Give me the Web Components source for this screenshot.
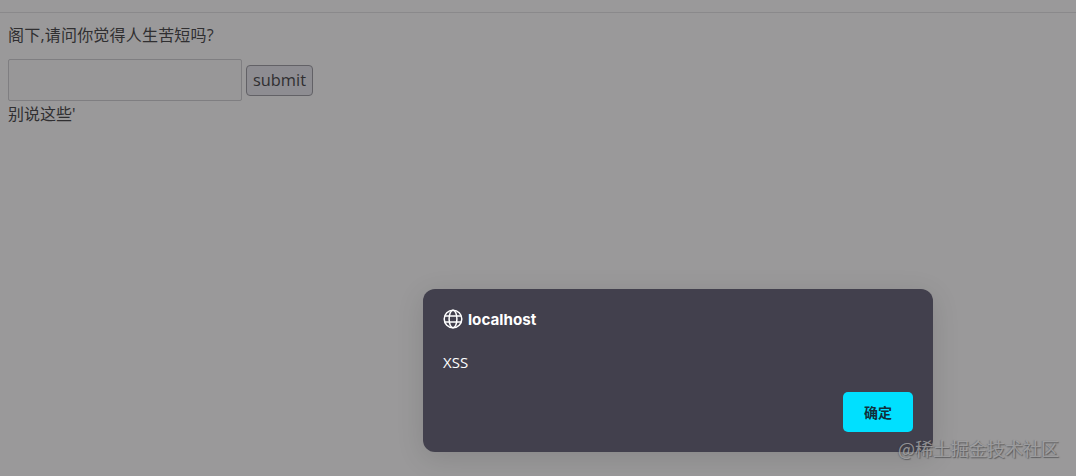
<!DOCTYPE html>
<html lang="zh">
<head>
<meta charset="utf-8">
<title>XSS</title>
<style>
	html, body { margin: 0; height: 100%; background: #9a999a; overflow: hidden; }
</style>
</head>
<body>
<xss-page>
	<span slot="question">阁下,请问你觉得人生苦短吗?</span>
	<span slot="answer">别说这些'</span>
</xss-page>
<alert-dialog host-name="localhost" confirm="确定">XSS</alert-dialog>
<water-mark>@稀土掘金技术社区</water-mark>

<script>
(function() {
	const cjk = '"Open Sans", "Noto Sans CJK SC", sans-serif';

	class xssPage extends HTMLElement {
		constructor() {
			super();
			this.attachShadow({mode: "open"}).innerHTML = `
				<style>
				:host {
					display: block;
					font: 16px/24px ${cjk};
					color: #302f31;
				}
				.top { height: 12px; border-bottom: 1px solid #8a898b; }
				main { padding: 10px 8px 0; }
				p { margin: 0 0 12px; height: 24px; letter-spacing: .2px; }
				form { display: flex; align-items: center; gap: 4px; }
				input {
					box-sizing: border-box;
					width: 234px;
					height: 42px;
					padding: 0;
					background: #989798;
					border: 1px solid #7f7e81;
					border-radius: 2px;
				}
				button {
					box-sizing: border-box;
					width: 67px;
					height: 31px;
					padding: 0;
					font: inherit;
					font-size: 16.4px;
					color: inherit;
					background: #8e8d92;
					border: 1px solid #626166;
					border-radius: 4px;
				}
				.answer { height: 26px; line-height: 26px; }
				</style>
				<div class="top"></div>
				<main>
					<p><slot name="question"></slot></p>
					<form>
						<input type="text">
						<button type="button">submit</button>
					</form>
					<div class="answer"><slot name="answer"></slot></div>
				</main>
			`;
		}
	}

	class alertDialog extends HTMLElement {
		constructor() {
			super();
			this.attachShadow({mode: "open"}).innerHTML = `
				<style>
				:host {
					position: absolute;
					left: 423px;
					top: 289px;
					box-sizing: border-box;
					width: 510px;
					height: 163px;
					padding: 20px;
					display: flex;
					flex-direction: column;
					background: #42404d;
					border-radius: 12px;
					box-shadow: 0 6px 28px rgba(0, 0, 0, .12);
					color: #fff;
					font: 15px/20px Inter, "Noto Sans CJK SC", sans-serif;
				}
				header { display: flex; align-items: center; gap: 5px; height: 20px; font-weight: 700; }
				header span { position: relative; top: 1px; font-size: 15.2px; }
				svg { display: block; }
				.msg { margin-top: 23px; font-size: 15px; font-family: "Open Sans", sans-serif; }
				footer { margin-top: auto; display: flex; justify-content: flex-end; }
				button {
					width: 70px;
					height: 40px;
					padding: 0;
					border: 0;
					border-radius: 5px;
					background: #00e0ff;
					color: #10303c;
					font: 700 14px/20px "Noto Sans CJK SC", sans-serif;
				}
				</style>
				<header>
					<svg width="20" height="20" viewBox="0 0 20 20" fill="none" stroke="#fff" stroke-width="1.5">
						<circle cx="10" cy="10" r="8.8"/>
						<ellipse cx="10" cy="10" rx="3.9" ry="8.8"/>
						<path d="M1.8 7h16.4M1.8 13h16.4"/>
					</svg>
					<span id="host"></span>
				</header>
				<div class="msg"><slot></slot></div>
				<footer><button type="button" id="ok"></button></footer>
			`;
		}

		connectedCallback() {
			this.shadowRoot.getElementById("host").textContent = this.getAttribute("host-name");
			this.shadowRoot.getElementById("ok").textContent = this.getAttribute("confirm");
		}
	}

	class waterMark extends HTMLElement {
		constructor() {
			super();
			this.attachShadow({mode: "open"}).innerHTML = `
				<style>
				:host {
					position: absolute;
					right: 17px;
					top: 435px;
					font: 18px/26px "Noto Sans CJK SC", sans-serif;
					color: rgba(168, 168, 170, .8);
					text-shadow: 1px 1px 1px rgba(60, 60, 62, .6), -1px 0 1px rgba(60, 60, 62, .3);
					white-space: nowrap;
				}
				</style>
				<slot></slot>
			`;
		}
	}

	customElements.define("xss-page", xssPage);
	customElements.define("alert-dialog", alertDialog);
	customElements.define("water-mark", waterMark);
})();
</script>
</body>
</html>
